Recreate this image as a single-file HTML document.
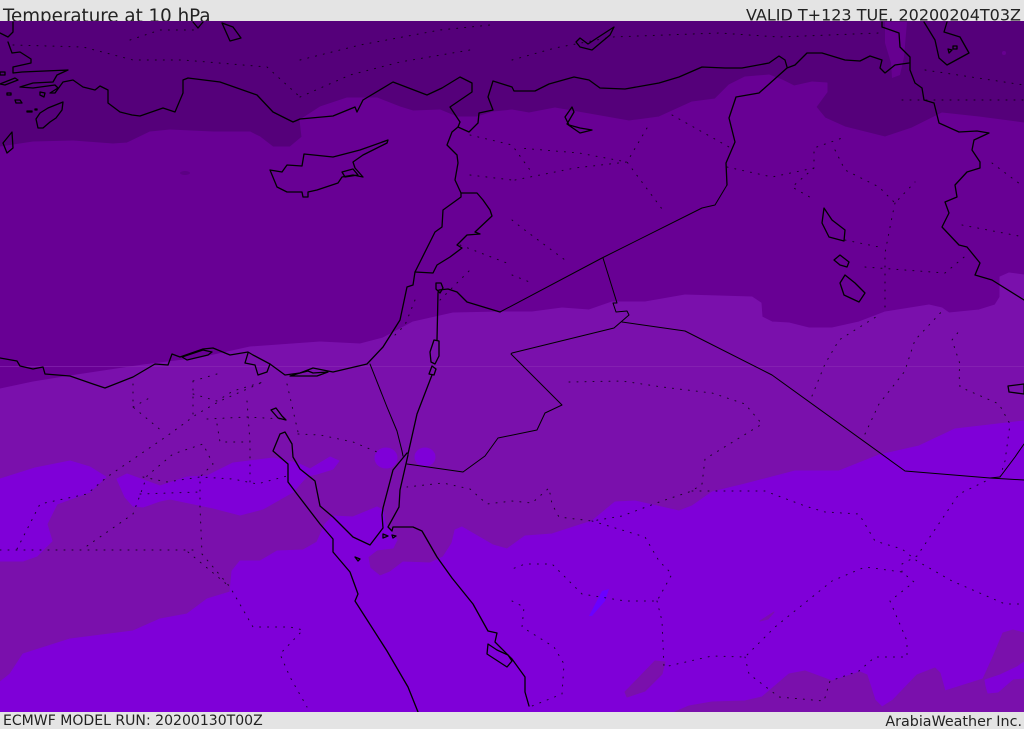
<!DOCTYPE html>
<html><head><meta charset="utf-8"><title>Temperature at 10 hPa</title>
<style>
html,body{margin:0;padding:0;background:#e4e4e4;width:1024px;height:729px;overflow:hidden}
svg{display:block}
.c{fill:none;stroke:#000;stroke-width:1.3;stroke-linejoin:round;stroke-linecap:round}
.b{fill:none;stroke:#000;stroke-width:1;stroke-linejoin:round;stroke-linecap:round}
.d{fill:none;stroke:#000;stroke-width:1;stroke-dasharray:1 7;stroke-linecap:round;opacity:.75}
text{font-family:"DejaVu Sans","Liberation Sans",sans-serif;fill:#222}
</style></head><body>
<svg width="1024" height="729" viewBox="0 0 1024 729" xmlns="http://www.w3.org/2000/svg">
<rect width="1024" height="729" fill="#e4e4e4"/>
<text x="3" y="22" font-size="18.25">Temperature at 10 hPa</text>
<text x="1021" y="20.5" font-size="16" text-anchor="end">VALID T+123 TUE, 20200204T03Z</text>
<rect y="21" width="1024" height="691" fill="#55007a"/>
<!-- mid -->
<path stroke="#680094" stroke-width="1" stroke-linejoin="round" fill="#680094" d="M0 147L33 142 73 141 113 144 127 143 150 132 170 130 213 132 250 132 260 137 273 147 290 147 302 137 300 120 320 107 347 98 377 98 400 107 413 111 440 110 457 117 477 117 493 112 512 110 529 113 555 108 595 115 629 121 659 117 692 102 715 99 729 85 745 77 769 75 782 80 794 86 812 82 827 83 827 92 816 107 825 118 845 127 885 137 912 128 942 113 979 117 1024 123V400H0Z"/>
<path fill="#660090" d="M885 22H907L904 57 900 75 892 78 891 63 885 43Z"/>
<ellipse cx="1004" cy="53" rx="2" ry="2" fill="#660090"/>
<ellipse cx="185" cy="173" rx="5" ry="2" fill="#5c0084"/>
<!-- band -->
<path stroke="#7a10ac" stroke-width="1" stroke-linejoin="round" fill="#7a10ac" d="M0 389L33 382 70 376 143 365 200 358 250 347 320 342 360 344 383 338 413 322 453 313 500 312 532 312 562 308 589 310 612 302 645 302 685 295 719 296 752 297 761 303 762 317 772 322 789 323 809 328 832 328 859 322 885 312 929 305 942 308 949 313 979 310 995 305 1000 297 1000 277 1009 273 1024 275V712H0Z"/>
<rect y="366" width="1024" height="1" fill="#8a2cb4" opacity=".6"/>
<!-- bright -->
<g fill="#7f00d8" stroke="#7f00d8" stroke-width="1" stroke-linejoin="round">
<path d="M0 479L35 468 70 461 90 467 106 477 90 492 57 504 47 524 52 541 37 556 23 561H0Z"/>
<path d="M117 479L127 474 160 486 187 477 207 476 233 463 273 458 297 463 310 469 330 457 339 461 333 469 317 474 307 476 293 492 263 509 240 515 213 508 170 499 160 501 143 507 133 506 125 497Z"/>
<ellipse cx="386" cy="458" rx="11" ry="10"/>
<ellipse cx="425" cy="457" rx="10" ry="9"/>
<path d="M0 682L10 674 23 654 70 639 133 631 160 619 187 614 207 599 230 592 232 571 240 561 260 561 277 551 303 550 317 542 325 524 333 516 353 517 377 507 383 510 385 523 397 540 393 548 377 550 368 557 370 568 380 576 390 572 403 562 430 563 443 557 452 543 455 530 462 527 493 545 507 549 525 536 552 534 592 521 615 502 635 501 679 511 692 506 712 492 745 484 795 471 839 471 879 455 919 446 955 429 1024 421V712H0Z"/>
</g>
<!-- band blobs over bright -->
<g fill="#7a10ac" stroke="#7a10ac" stroke-width="1" stroke-linejoin="round">
<path d="M675 712L689 706 712 702 745 701 762 697 789 674 805 671 832 681 860 672 867 675 875 700 882 707 893 700 917 675 935 668 940 673 945 691 983 679 993 657 1003 633 1013 630 1024 633V712Z"/>
<path d="M625 692L655 661 665 662 662 674 645 691 627 697Z"/>
<path d="M760 621L774 612 768 619Z"/>
</g>
<path fill="#7f00d8" stroke="#7f00d8" stroke-width="1" stroke-linejoin="round" d="M985 680L1000 675 1017 667 1024 662V678L1013 679 998 692 988 693 986 686Z"/>
<path fill="#6a00ff" d="M589 616L602 591 609 589 605 601 592 616Z"/>
<!-- dotted -->
<g class="d">
<path d="M569 382L622 381 662 387 712 393 745 404 762 424 705 459 702 484 692 491 662 501 622 516 592 521 559 517 552 504 549 488 532 503 512 501 487 504 470 489 443 483 407 487"/>
<path d="M592 521L645 537 659 561 672 574 657 601 625 601 582 594 552 564 525 564 512 569"/>
<path d="M657 601L662 621 664 667 712 656 745 657 775 627 832 581 865 567 902 572 914 582 890 601 907 641 907 657 875 657 859 671 830 681 824 701 779 697 749 674 745 657"/>
<path d="M692 491L765 491 805 506 825 512 859 514 875 541 902 549 917 561 952 581 1005 604 1024 604"/>
<path d="M902 572V564L917 556 959 494 990 479"/>
<path d="M1000 477L1005 461 1010 424 999 404 960 387 959 374 960 364 952 340 960 330"/>
<path d="M865 434L879 404 905 371 907 364 915 340 945 308"/>
<path d="M812 396L825 364 839 340 879 315"/>
<path d="M512 601L524 607 522 627 554 647 564 664 562 694 532 706"/>
<path d="M0 550H200"/>
<path d="M17 549L40 504 87 494 107 477 167 436 197 414 220 401 263 382"/>
<path d="M87 546L133 514 143 487 147 476 173 454 203 444 213 464 200 477 200 507 202 554 230 587 253 627 290 627 303 630 280 654 290 677 307 707"/>
<path d="M143 477L167 482 200 477 233 479 257 484 287 476"/>
<path d="M140 494L200 492"/>
<path d="M133 384V407L163 432M133 407L153 396"/>
<path d="M193 381V414M193 381L217 374M193 394L217 401 233 391 263 382"/>
<path d="M207 419L247 417 283 419M287 384L298 432"/>
<path d="M217 424L220 442 250 442M247 401L250 442 250 482"/>
<path d="M298 434L320 435 353 442 377 452"/>
<path d="M188 552L230 587"/>
<path d="M13 45L83 47 133 60 183 60 267 67 300 97"/>
<path d="M130 40L160 30 200 30"/>
<path d="M300 97L350 75 400 62 470 50M300 60L360 45 440 30 490 25"/>
<path d="M512 60L555 48 612 37 719 33 779 37 879 33"/>
<path d="M515 180L575 168 627 162 579 153 519 148"/>
<path d="M647 128L627 162 665 213"/>
<path d="M672 115L729 147"/>
<path d="M727 167L772 177 814 168 814 148 845 137M814 168L792 187 815 200"/>
<path d="M835 150L845 170 879 187 895 203 915 182M895 203L892 217 885 253 885 312"/>
<path d="M845 240L879 247M865 267L945 273 969 253M962 225L1024 237M992 163L1024 187"/>
<path d="M902 100H1024M512 275L532 283M512 220L522 228 565 260"/>
<path d="M925 70L1024 85M470 135L512 145 530 170M470 175L512 180M460 245L512 265M440 300L470 270"/>
<path d="M395 335L405 325 415 300"/>
</g>
<!-- straight borders -->
<g class="b">
<path d="M370 364L387 407 397 431 402 451 403 456"/>
<path d="M500 312L602 258 702 208 715 205 727 185"/>
<path d="M603 258L617 303 613 303 616 312 627 311 629 315 614 328 512 353 511 354 562 405 545 413 537 430 498 438 485 456 463 472 407 464"/>
<path d="M622 322L685 331 772 375 905 471 990 478 1024 480"/>
<path d="M990 478L1000 477 1015 457 1024 444"/>
</g>
<!-- coast -->
<g class="c">
<path d="M13 22V32L8 37 0 33M8 42L12 53 20 52 31 59V63L13 67 13 73 22 72 68 70 57 75 53 82 33 83 20 87 33 88 55 85 58 88 50 93H55L63 82 73 80 83 87 95 90 100 86 108 90V103L120 112 132 115 140 116 163 108 175 112 183 93V80L188 78 220 82 257 95 273 112 293 122 300 119 333 116 355 107 357 112 363 100 393 82 427 95 442 88 460 77 472 83V92L450 107 460 122 458 127 452 132 447 145 457 155 458 163 455 180 461 193V197L443 210 442 227 435 232 415 272 413 285 407 287 400 320 383 347 367 364 333 372 313 368 300 373 285 375 270 364 253 355 248 352 230 355 213 348 203 349 180 357 172 354 168 365 155 364 133 377 105 388 93 384 70 376 45 374 43 367 33 369 20 366 17 361 0 358"/>
<path d="M270 364L267 372 258 375 255 365 245 363 248 353"/>
<path d="M182 357L203 350 212 352 208 355 187 360Z"/>
<path d="M290 376L300 373 308 371 313 373 328 372 317 376Z"/>
<path d="M407 453L393 470 383 508 382 515 383 528 370 545 353 537 333 517 320 506 315 481 300 469 293 457 292 444 285 432 280 434 273 451 288 464V482L297 494 320 524 333 539V552L350 572 358 594 355 601 387 651 408 687 418 712"/>
<path d="M408 455L400 490 399 507 388 527 392 531 393 527 413 527 422 531 437 557 452 578 473 604 488 631 497 633 495 642 512 659 525 677V692L529 706"/>
<path d="M383 534L388 536 383 538ZM392 535L396 536 393 538ZM355 557L360 559 358 561Z"/>
<path d="M488 644L487 654 507 667 512 661 508 655 497 650Z"/>
<path d="M439 290L438 293 437 340"/>
<path d="M436 283L441 283 443 288 440 293 436 289Z"/>
<path d="M434 340L439 341 439 356 435 364 431 362 430 352Z"/>
<path d="M432 366L436 369 434 375 429 374Z"/>
<path d="M432 375L417 414 408 454"/>
<path d="M439 290L448 289 457 292 467 302 500 312"/>
<path d="M727 185L726 163 735 142 729 118 736 97 759 93 787 68 795 65 807 53 822 53 845 60 860 61 870 56 882 60 880 68 885 73 895 65 909 63"/>
<path d="M882 22V27L899 33 900 47 910 57V70L915 83 922 88 924 100 934 103 939 123 959 132 977 131 989 133 974 140 972 150 980 162V168L967 172 955 185 957 197 945 202 949 213 942 227 959 245 967 247 980 263 975 275 992 280 1024 300"/>
<path d="M458 127L469 132 478 123 479 113 493 110 488 97 493 81 512 87 514 91 535 91 549 84 574 77 589 80 600 88 625 89 659 83 679 77 702 67 725 68 742 68 769 63 779 56 785 60 787 67"/>
<path d="M461 193H477L483 200 490 210 492 216 475 232 480 234 467 235 457 245 462 248 450 257 437 265 433 273 415 272"/>
<path d="M270 170L282 172 287 165 302 166 304 154 333 157 360 150 388 140 387 143 363 155 353 162 355 168 363 177 353 175 342 177 338 183 317 190 308 192V197H303L302 192 287 192 277 187Z"/>
<path d="M342 172L353 169 358 175 345 177Z"/>
<path d="M63 102L48 108 40 113 36 119 38 128 43 128 50 122 56 118 62 110Z"/>
<path d="M12 132L3 143 7 153 13 148Z"/>
<path d="M222 23L230 41 241 38 233 27Z"/>
<path d="M193 22L198 28 203 22"/>
<path d="M0 84L15 78 18 80 5 85ZM7 93H11V95H7ZM15 100L20 100 22 103 16 103ZM27 111H32V112H27ZM0 72H5V75H0ZM40 92L45 93 44 97 40 95ZM35 109H37V110H35Z"/>
<path d="M576 42L580 38 588 44 597 38 614 27 610 35 592 50 580 47Z"/>
<path d="M572 107L565 117 569 125 580 128 592 130 580 133 567 124 574 112Z"/>
<path d="M924 22L935 40 939 58 947 65 969 53 960 37 944 32 947 22"/>
<path d="M948 49L952 50 949 53ZM953 46H957V49H953Z"/>
<path d="M824 208L822 223 829 237 844 241 845 230 832 220Z"/>
<path d="M834 260L840 255 849 262 847 267 840 265Z"/>
<path d="M845 275L840 283 844 295 859 302 865 293 855 283Z"/>
<path d="M1008 386L1024 384V394L1009 392Z"/>
<path d="M271 410L276 408 282 416 286 420 278 418Z"/>
</g>
<rect y="712" width="1024" height="17" fill="#e4e4e4"/>
<text x="3" y="725" font-size="14.05">ECMWF MODEL RUN: 20200130T00Z</text>
<text x="1022" y="726" font-size="14.3" text-anchor="end">ArabiaWeather Inc.</text>
</svg>
</body></html>
